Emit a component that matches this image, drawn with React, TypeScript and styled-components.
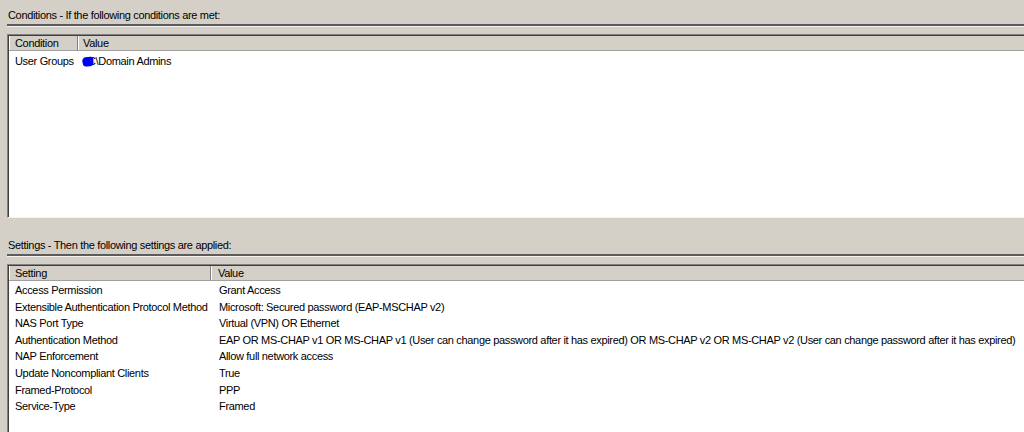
import React from "react";
import styled, { createGlobalStyle } from "styled-components";

const Global = createGlobalStyle`
  html, body { margin: 0; padding: 0; background: #d4d0c8; }
  body {
    font-family: "Liberation Sans", Arial, sans-serif;
    font-size: 11px;
    letter-spacing: -0.33px;
    color: #000;
  }
`;

const Page = styled.div`
  width: 1024px;
  height: 432px;
  overflow: hidden;
  background: #d4d0c8;
  display: flex;
  flex-direction: column;
  padding-left: 7px;
  box-sizing: border-box;
`;

const Title = styled.div<{ $top: number }>`
  padding-top: ${(p) => p.$top}px;
  padding-left: 1px;
  line-height: 14px;
  height: 14px;
  white-space: nowrap;
`;

const Rule = styled.div`
  margin-top: 2px;
  margin-right: -10px;
  border-top: 2px solid #5c5c5c;
  border-bottom: 1px solid #f4f3f0;
  height: 0;
`;

const ListBox = styled.div<{ $height?: number }>`
  margin-top: 7px;
  margin-right: -10px;
  ${(p) => (p.$height ? `height: ${p.$height}px;` : "flex: 1; margin-bottom: -10px;")}
  flex-shrink: 0;
  background: #fff;
  border-top: 1px solid #808080;
  border-left: 1px solid #808080;
  border-bottom: 1px solid #f4f3f0;
  box-shadow: inset 1px 1px 0 #404040;
  box-sizing: border-box;
  padding: 1px 0 0 1px;
  overflow: hidden;
`;

const Grid = styled.div<{ $first: number }>`
  display: grid;
  grid-template-columns: ${(p) => p.$first}px 1fr;
`;

const HeaderCell = styled.div<{ $pad: number }>`
  height: 15px;
  line-height: 15px;
  background: #d4d0c8;
  border-bottom: 1px solid #a0a0a0;
  border-right: 1px solid #808080;
  box-shadow: inset 1px 0 0 #ffffff;
  padding-left: ${(p) => p.$pad}px;
  box-sizing: border-box;
  white-space: nowrap;
`;

const Rows = styled.div<{ $top: number }>`
  padding-top: ${(p) => p.$top}px;
`;

const Cell = styled.div<{ $pad: number }>`
  height: 16.6px;
  line-height: 16.6px;
  padding-left: ${(p) => p.$pad}px;
  white-space: nowrap;
  display: flex;
  align-items: center;
`;

const Blob = styled.svg`
  position: relative;
  z-index: 1;
  width: 12px;
  height: 11px;
  margin-right: -6px;
  flex-shrink: 0;
`;

const conditions = [{ name: "User Groups", value: "C\\Domain Admins", masked: true }];

const settings: [string, string][] = [
  ["Access Permission", "Grant Access"],
  ["Extensible Authentication Protocol Method", "Microsoft: Secured password (EAP-MSCHAP v2)"],
  ["NAS Port Type", "Virtual (VPN) OR Ethernet"],
  [
    "Authentication Method",
    "EAP OR MS-CHAP v1 OR MS-CHAP v1 (User can change password after it has expired) OR MS-CHAP v2 OR MS-CHAP v2 (User can change password after it has expired)",
  ],
  ["NAP Enforcement", "Allow full network access"],
  ["Update Noncompliant Clients", "True"],
  ["Framed-Protocol", "PPP"],
  ["Service-Type", "Framed"],
];

export default function App() {
  return (
    <>
      <Global />
      <Page>
        <Title $top={8}>Conditions - If the following conditions are met:</Title>
        <Rule />
        <ListBox $height={184}>
          <Grid $first={69}>
            <HeaderCell $pad={6}>Condition</HeaderCell>
            <HeaderCell $pad={5}>Value</HeaderCell>
          </Grid>
          <Rows $top={2}>
            {conditions.map((c) => (
              <Grid $first={69} key={c.name}>
                <Cell $pad={6}>{c.name}</Cell>
                <Cell $pad={4}>
                  {c.masked && (
                    <Blob viewBox="0 0 12 11">
                      <path
                        d="M1 3 C2 0.5 5 1.5 7.5 0.8 C10 0.2 12 2 11.4 5 C12 8 10.5 10.8 7.2 10.2 C4 11 1 10.4 0.8 7.4 C0 5.5 0.2 4 1 3Z"
                        fill="#0000ff"
                      />
                    </Blob>
                  )}
                  <span>{c.value}</span>
                </Cell>
              </Grid>
            ))}
          </Rows>
        </ListBox>
        <Title $top={20}>Settings - Then the following settings are applied:</Title>
        <Rule />
        <ListBox>
          <Grid $first={202}>
            <HeaderCell $pad={6}>Setting</HeaderCell>
            <HeaderCell $pad={7}>Value</HeaderCell>
          </Grid>
          <Rows $top={1}>
            {settings.map(([k, v]) => (
              <Grid $first={202} key={k}>
                <Cell $pad={6}>{k}</Cell>
                <Cell $pad={8}>{v}</Cell>
              </Grid>
            ))}
          </Rows>
        </ListBox>
      </Page>
    </>
  );
}
